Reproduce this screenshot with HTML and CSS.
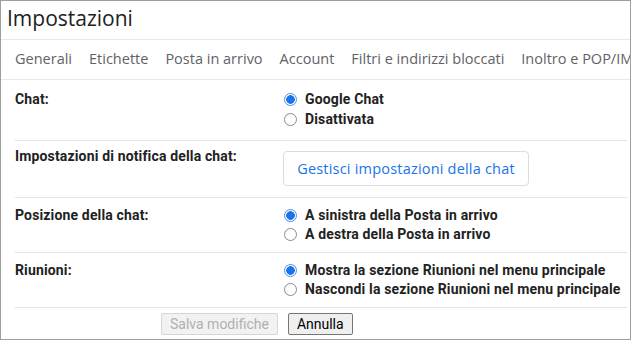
FILE: index.html
```html
<!DOCTYPE html>
<html lang="it">
<head>
    <meta charset="UTF-8">
    <meta name="viewport" content="width=device-width, initial-scale=1.0">
    <title>Impostazioni</title>
    <link rel="stylesheet" href="styles.css">
</head>
<body>
    <div class="settings">
        <h1 class="title">Impostazioni</h1>

        <nav class="tabs">
            <span class="tab">Generali</span>
            <span class="tab">Etichette</span>
            <span class="tab">Posta in arrivo</span>
            <span class="tab">Account</span>
            <span class="tab">Filtri e indirizzi bloccati</span>
            <span class="tab">Inoltro e POP/IMAP</span>
        </nav>

        <div class="rows">
            <div class="row row-tall">
                <div class="label">Chat:</div>
                <div class="value">
                    <label class="option"><input type="radio" name="chat" checked> Google Chat</label>
                    <label class="option"><input type="radio" name="chat"> Disattivata</label>
                </div>
            </div>

            <div class="row row-button">
                <div class="label">Impostazioni di notifica della chat:</div>
                <div class="value">
                    <button class="btn-outline">Gestisci impostazioni della chat</button>
                </div>
            </div>

            <div class="row">
                <div class="label">Posizione della chat:</div>
                <div class="value">
                    <label class="option"><input type="radio" name="position" checked> A sinistra della Posta in arrivo</label>
                    <label class="option"><input type="radio" name="position"> A destra della Posta in arrivo</label>
                </div>
            </div>

            <div class="row">
                <div class="label">Riunioni:</div>
                <div class="value">
                    <label class="option"><input type="radio" name="meet" checked> Mostra la sezione Riunioni nel menu principale</label>
                    <label class="option"><input type="radio" name="meet"> Nascondi la sezione Riunioni nel menu principale</label>
                </div>
            </div>
        </div>

        <div class="actions">
            <button class="btn" disabled>Salva modifiche</button>
            <button class="btn">Annulla</button>
        </div>
    </div>
</body>
</html>
```

FILE: styles.css
```css
body {
    margin: 0;
    padding: 0;
    background: #ffffff;
    font-family: Roboto, "Liberation Sans", Arial, sans-serif;
}
.settings {
    width: 631px;
    height: 340px;
    box-sizing: border-box;
    border: 1px solid #9e9e9e;
    overflow: hidden;
    background: #ffffff;
}
.title {
    margin: 0;
    padding-left: 6px;
    height: 38px;
    line-height: 35px;
    font-family: "Open Sans", sans-serif;
    font-size: 21px;
    font-weight: normal;
    color: #202124;
    border-bottom: 1px solid #e8e8e8;
}
.tabs {
    display: flex;
    gap: 17px;
    height: 39px;
    padding-left: 14px;
    line-height: 38px;
    white-space: nowrap;
    overflow: hidden;
    font-family: "Open Sans", sans-serif;
    font-size: 14.5px;
    color: #5f6368;
    border-bottom: 1px solid #e8e8e8;
}
.rows {
    margin: 0 3px 0 14px;
}
.row {
    display: grid;
    grid-template-columns: 268px 1fr;
    padding: 8px 0 8px;
    border-bottom: 1px solid #e3e3e3;
    font-size: 14px;
    font-weight: bold;
    letter-spacing: 0.15px;
    color: #222222;
    line-height: 19px;
}
.row-tall {
    padding: 9px 0 11px;
    line-height: 20px;
}
.row-button {
    padding: 6px 0 11px;
}
.row-button .value {
    padding-top: 4px;
}
.option {
    display: flex;
    align-items: center;
    gap: 8px;
}
.option input {
    appearance: none;
    -webkit-appearance: none;
    margin: 0 0 0 1px;
    width: 13px;
    height: 13px;
    border-radius: 50%;
    border: 1px solid #8a8a8a;
    background: #ffffff;
    box-sizing: border-box;
}
.option input:checked {
    border-color: #4a8fe8;
    background: radial-gradient(circle, #1a73e8 0 4px, #ffffff 4.6px);
}
.btn-outline {
    height: 35px;
    width: 246px;
    padding: 0;
    background: #ffffff;
    border: 1px solid #dadce0;
    border-radius: 4px;
    font-family: "Open Sans", sans-serif;
    font-size: 14.5px;
    font-weight: 500;
    letter-spacing: 0.2px;
    color: #1a73e8;
}
.actions {
    display: flex;
    gap: 10px;
    padding: 5px 0 0 160px;
}
.btn {
    height: 22px;
    padding: 0 8px;
    background: #efefef;
    border: 1px solid #767676;
    border-radius: 2px;
    font-family: Roboto, "Liberation Sans", Arial, sans-serif;
    font-size: 14px;
    color: #000000;
}
.btn:disabled {
    border-color: #d6d6d6;
    background: #f2f2f2;
    color: #b0b0b0;
}
```
